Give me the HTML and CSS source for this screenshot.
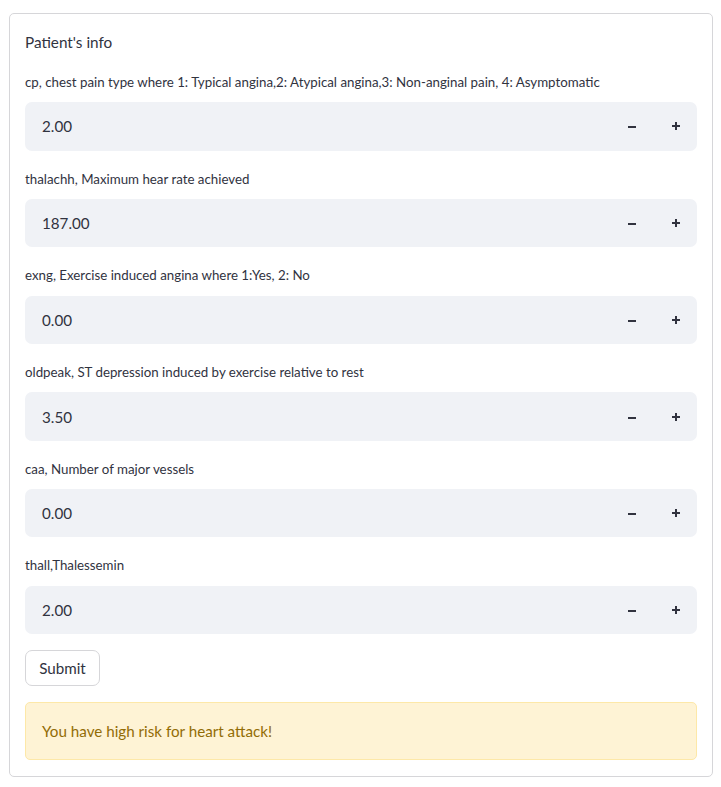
FILE: index.html
```html
<!DOCTYPE html>
<html>
<head>
<meta charset="utf-8">
<link rel="stylesheet" href="styles.css">
</head>
<body>
<form class="form">
  <div class="title">Patient's info</div>

  <div class="field">
    <label class="label">cp, chest pain type where 1: Typical angina,2: Atypical angina,3: Non-anginal pain, 4: Asymptomatic</label>
    <div class="num">
      <span class="value">2.00</span>
      <span class="step minus"><span class="bar"></span></span>
      <span class="step plus"><span class="bar"></span><span class="bar v"></span></span>
    </div>
  </div>

  <div class="field">
    <label class="label">thalachh, Maximum hear rate achieved</label>
    <div class="num">
      <span class="value">187.00</span>
      <span class="step minus"><span class="bar"></span></span>
      <span class="step plus"><span class="bar"></span><span class="bar v"></span></span>
    </div>
  </div>

  <div class="field">
    <label class="label">exng, Exercise induced angina where 1:Yes, 2: No</label>
    <div class="num">
      <span class="value">0.00</span>
      <span class="step minus"><span class="bar"></span></span>
      <span class="step plus"><span class="bar"></span><span class="bar v"></span></span>
    </div>
  </div>

  <div class="field">
    <label class="label">oldpeak, ST depression induced by exercise relative to rest</label>
    <div class="num">
      <span class="value">3.50</span>
      <span class="step minus"><span class="bar"></span></span>
      <span class="step plus"><span class="bar"></span><span class="bar v"></span></span>
    </div>
  </div>

  <div class="field">
    <label class="label">caa, Number of major vessels</label>
    <div class="num">
      <span class="value">0.00</span>
      <span class="step minus"><span class="bar"></span></span>
      <span class="step plus"><span class="bar"></span><span class="bar v"></span></span>
    </div>
  </div>

  <div class="field">
    <label class="label">thall,Thalessemin</label>
    <div class="num">
      <span class="value">2.00</span>
      <span class="step minus"><span class="bar"></span></span>
      <span class="step plus"><span class="bar"></span><span class="bar v"></span></span>
    </div>
  </div>

  <div class="actions">
    <button type="button" class="submit">Submit</button>
  </div>

  <div class="alert">You have high risk for heart attack!</div>
</form>
</body>
</html>
```

FILE: styles.css
```css
html, body {
  margin: 0;
  padding: 0;
  background: #ffffff;
}
body {
  font-family: Lato, "Noto Sans", sans-serif;
  color: #31333f;
  padding: 13px 8px 10px 9px;
}
.form {
  border: 1px solid #d6d6d9;
  border-radius: 5px;
  padding: 15px 15px 16px 15px;
  display: flex;
  flex-direction: column;
  gap: 16px;
  width: 672px;
}
.title {
  font-size: 15.3px;
  line-height: 24px;
  margin-top: 1px;
}
.field {
  display: flex;
  flex-direction: column;
}
.label {
  font-size: 13.3px;
  line-height: 24.3px;
  margin-bottom: 8px;
}
.num {
  display: flex;
  align-items: center;
  height: 48.4px;
  background: #f0f2f6;
  border-radius: 7px;
}
.value {
  flex: 1;
  padding-left: 17px;
  font-size: 15.2px;
}
.step {
  position: relative;
  height: 100%;
  display: block;
}
.minus { width: 46px; }
.plus { width: 42px; }
.bar {
  position: absolute;
  left: 50%;
  top: 50%;
  width: 8px;
  height: 2px;
  margin-left: -4px;
  margin-top: -1px;
  background: #31333f;
}
.minus .bar { top: 52%; }
.bar.v {
  width: 2px;
  height: 8px;
  margin-left: -1px;
  margin-top: -4px;
}
.actions {
  display: flex;
}
.submit {
  font-family: inherit;
  font-size: 15.2px;
  color: #31333f;
  background: #ffffff;
  border: 1px solid #d6d6d9;
  border-radius: 7px;
  height: 36px;
  width: 75px;
  padding: 0;
}
.alert {
  background: #fef3d5;
  border: 1px solid #fde8a8;
  border-radius: 5px;
  color: #926c05;
  font-size: 15.2px;
  line-height: 24px;
  padding: 16px;
}
```
